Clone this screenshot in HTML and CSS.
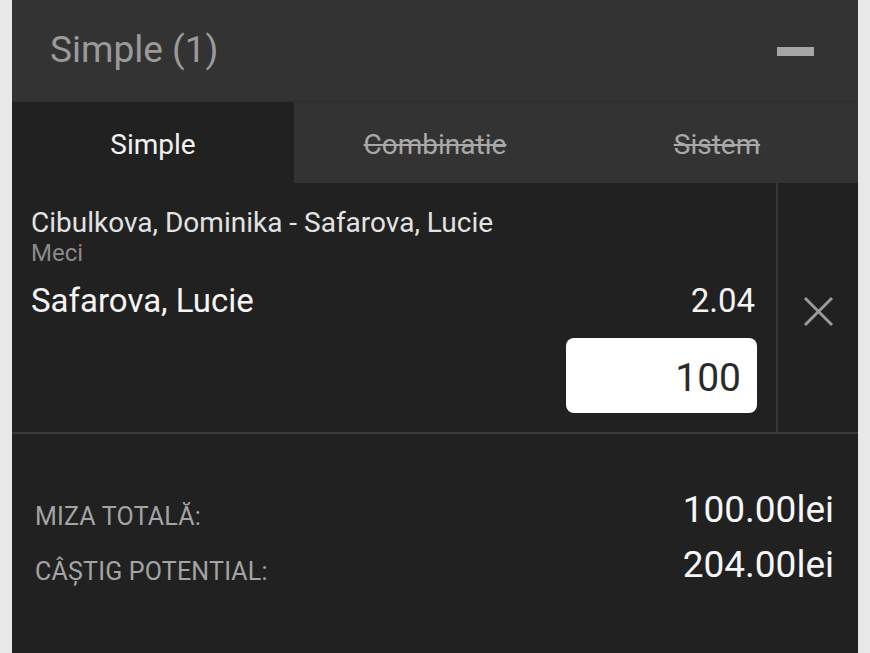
FILE: index.html
```html
<!DOCTYPE html>
<html lang="ro">
<head>
<meta charset="utf-8">
<title>Bilet</title>
<link rel="stylesheet" href="styles.css">
</head>
<body>
<div class="panel">
  <header class="header">
    <h1 class="title">Simple (1)</h1>
    <span class="collapse" aria-label="Restrânge"></span>
  </header>
  <nav class="tabs">
    <div class="tab active">Simple</div>
    <div class="tab disabled">Combinatie</div>
    <div class="tab disabled">Sistem</div>
  </nav>
  <section class="bet">
    <div class="bet-main">
      <div class="event">Cibulkova, Dominika - Safarova, Lucie</div>
      <div class="market">Meci</div>
      <div class="pick-row">
        <span class="pick">Safarova, Lucie</span>
        <span class="odds">2.04</span>
      </div>
      <div class="stake-row">
        <div class="stake">100</div>
      </div>
    </div>
    <div class="bet-remove">
      <svg class="x-icon" width="31" height="31" viewBox="0 0 31 31" aria-hidden="true">
        <path d="M2 2 L29 29 M29 2 L2 29" stroke="#9a9a9a" stroke-width="3" fill="none"/>
      </svg>
    </div>
  </section>
  <section class="summary">
    <div class="sum-row">
      <span class="sum-label">MIZA TOTALĂ:</span>
      <span class="sum-value">100.00lei</span>
    </div>
    <div class="sum-row">
      <span class="sum-label">CÂŞTIG POTENTIAL:</span>
      <span class="sum-value">204.00lei</span>
    </div>
  </section>
</div>
</body>
</html>
```
FILE: styles.css
```css
* { box-sizing: border-box; }
html, body {
  margin: 0;
  padding: 0;
  height: 100%;
}
body {
  background: #e8e8e8;
  font-family: Roboto, "Noto Sans", "Liberation Sans", sans-serif;
  overflow: hidden;
}
.panel {
  margin: 0 12px;
  height: 100%;
  background: #212121;
  display: flex;
  flex-direction: column;
}
.header {
  height: 102px;
  background: #333333;
  display: flex;
  align-items: center;
  justify-content: space-between;
  padding: 0 44px 0 38px;
  border-bottom: 1px solid #2d2d2d;
}
.title {
  margin: 0;
  font-weight: 400;
  font-size: 37px;
  color: #9a9a9a;
  line-height: 44px;
  padding-bottom: 2px;
}
.collapse {
  display: block;
  width: 37px;
  height: 9px;
  background: #a6a6a6;
  margin-top: 2px;
}
.tabs {
  display: flex;
  height: 81px;
  background: #333333;
}
.tab {
  flex: 1;
  display: flex;
  align-items: center;
  justify-content: center;
  font-size: 28px;
  padding-top: 4px;
  color: #a8a8a8;
}
.tab.active {
  background: #212121;
  color: #f2f2f2;
}
.tab.disabled {
  text-decoration: line-through;
  text-decoration-thickness: 2px;
}
.bet {
  display: flex;
  height: 251px;
  border-bottom: 2px solid #3a3a3a;
}
.bet-main {
  flex: 1;
  padding: 24px 19px 0 19px;
  display: flex;
  flex-direction: column;
}
.event {
  font-size: 28px;
  line-height: 32px;
  color: #e2e2e2;
}
.market {
  font-size: 24px;
  line-height: 28px;
  color: #8a8a8a;
}
.pick-row {
  margin-top: 15px;
  display: flex;
  justify-content: space-between;
  font-size: 33px;
  line-height: 38px;
  color: #f4f4f4;
  padding-right: 2px;
}
.stake-row {
  margin-top: 18px;
  display: flex;
  justify-content: flex-end;
}
.stake {
  width: 191px;
  height: 75px;
  background: #ffffff;
  border-radius: 8px;
  color: #2a2a2a;
  font-size: 39px;
  display: flex;
  align-items: center;
  justify-content: flex-end;
  padding: 4px 16px 0 0;
}
.bet-remove {
  width: 82px;
  border-left: 2px solid #363636;
  display: flex;
  align-items: center;
  justify-content: center;
  padding-top: 8px;
}
.summary {
  padding: 55px 24px 0 23px;
  display: flex;
  flex-direction: column;
  gap: 13px;
}
.sum-row {
  display: flex;
  justify-content: space-between;
  align-items: flex-end;
}
.sum-label {
  font-size: 25px;
  line-height: 28px;
  letter-spacing: 0.2px;
  color: #a4a4a4;
}
.sum-value {
  font-size: 37px;
  line-height: 42px;
  color: #f6f6f6;
}
```
